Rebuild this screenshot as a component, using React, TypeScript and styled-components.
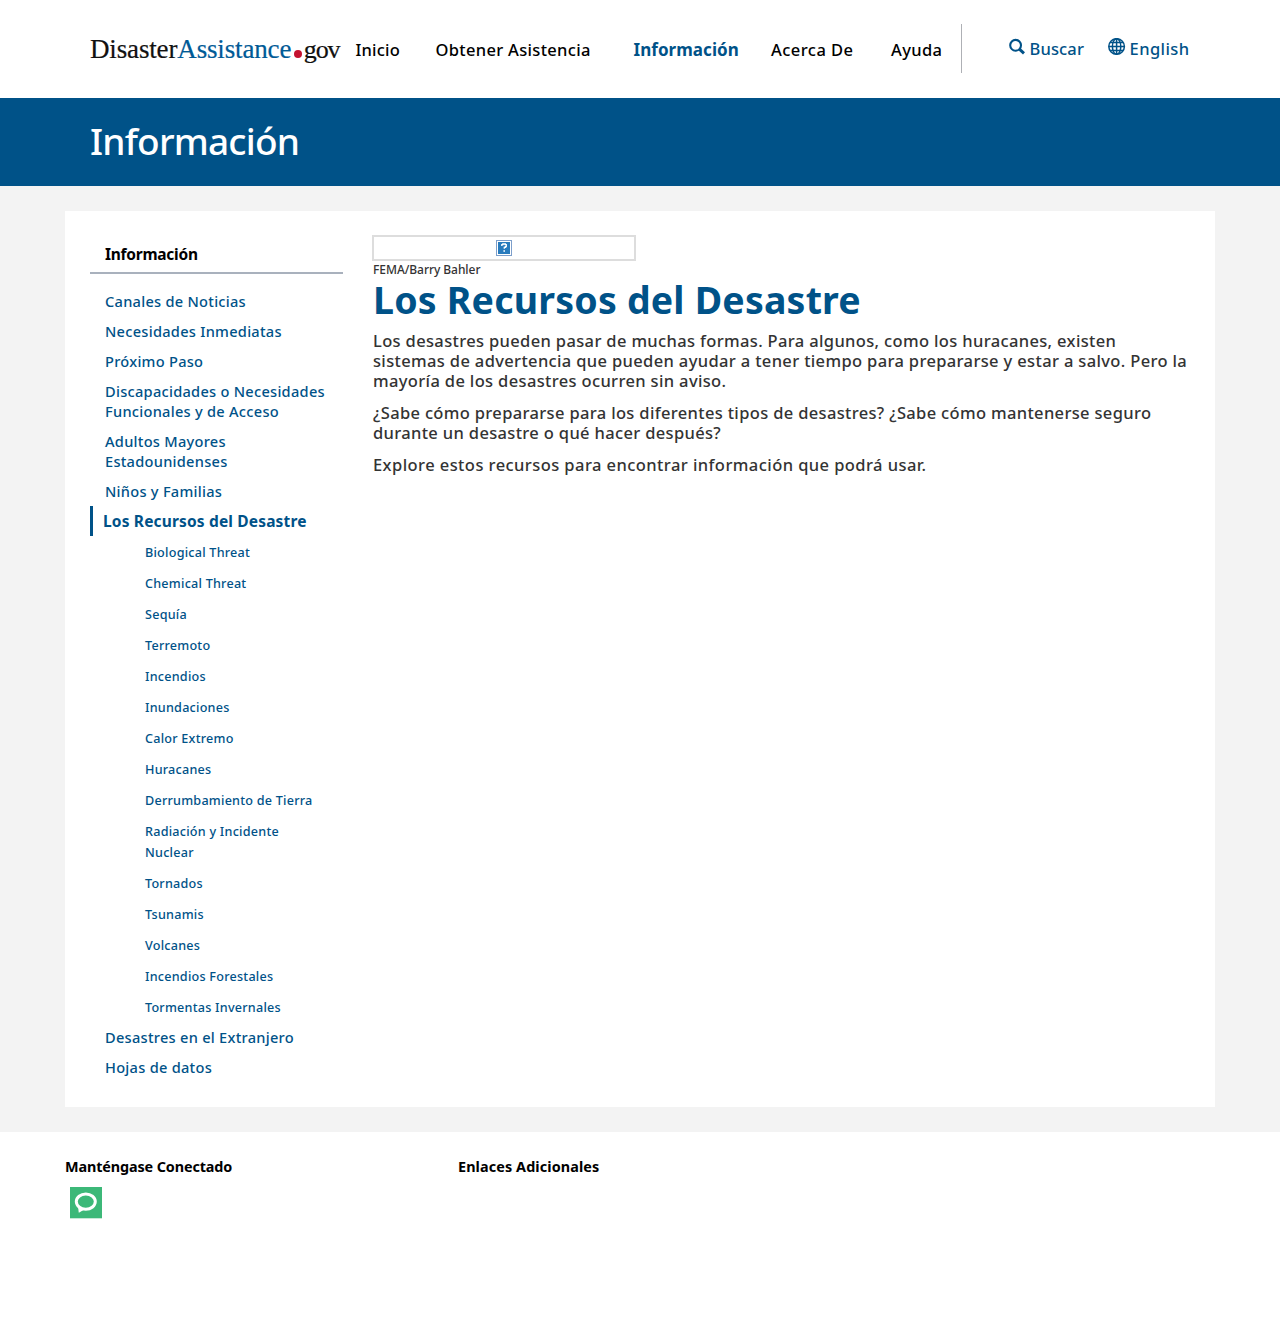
import React from "react";
import styled, { createGlobalStyle } from "styled-components";

const blue = "#005288";

const GlobalStyle = createGlobalStyle`
  *, *::before, *::after { box-sizing: border-box; }
  body {
    margin: 0;
    background: #fff;
    color: #333;
    font-family: "Noto Sans", "Open Sans", sans-serif;
    font-size: 16.5px;
    font-weight: 500;
  }
  h1, h2, h3, p, ul { margin: 0; padding: 0; }
  ul { list-style: none; }
  a { color: inherit; text-decoration: none; }
`;

const Page = styled.div`
  min-height: 1320px;
`;

const Header = styled.header`
  height: 98px;
  padding-left: 90px;
  display: flex;
  align-items: flex-start;
`;

const Logo = styled.a`
  width: 265.5px;
  padding-top: 34px;
  display: flex;
  align-items: baseline;
  font-family: "Liberation Serif", serif;
  font-size: 27px;
  font-weight: 400;
  line-height: 30px;
  color: #111;
  white-space: nowrap;
`;

const LogoPart = styled.span<{ $color?: string; $spacing: number }>`
  color: ${(p) => p.$color ?? "#111"};
  letter-spacing: ${(p) => p.$spacing}px;
  -webkit-text-stroke: 0.2px currentColor;
`;

const LogoSuffix = styled(LogoPart)`
  font-size: 26px;
`;

const LogoDot = styled.span`
  width: 8px;
  height: 8px;
  margin: 0 1.5px 0 3px;
  border-radius: 50%;
  background: #c41230;
`;

const Nav = styled.nav`
  display: flex;
  width: 606.5px;
  height: 49px;
  margin-top: 24px;
  padding-top: 16px;
  border-right: 1px solid #aeb0b5;
`;

const NavLink = styled.a<{ $width: number; $spacing: number; $active?: boolean }>`
  flex: none;
  width: ${(p) => p.$width}px;
  letter-spacing: ${(p) => p.$spacing}px;
  line-height: 20px;
  white-space: nowrap;
  color: ${(p) => (p.$active ? blue : "#000")};
  font-size: ${(p) => (p.$active ? 17 : 16.5)}px;
  font-weight: ${(p) => (p.$active ? 700 : 500)};
`;

const Tools = styled.div`
  display: flex;
  gap: 24px;
  padding: 38px 0 0 46px;
`;

const ToolLink = styled.a<{ $spacing: number }>`
  display: flex;
  gap: 3.5px;
  line-height: 21px;
  color: ${blue};
  letter-spacing: ${(p) => p.$spacing}px;

  svg { flex: none; }
`;

const Banner = styled.div`
  height: 88px;
  padding: 19px 0 0 90px;
  background: ${blue};
  color: #fff;
`;

const BannerTitle = styled.h1`
  font-size: 37px;
  font-weight: 500;
  line-height: 48px;
  letter-spacing: -0.8px;
`;

const Main = styled.main`
  padding: 25px 65px;
  background: #f3f3f3;
`;

const Card = styled.div`
  display: flex;
  align-items: flex-start;
  gap: 30px;
  height: 896px;
  padding: 24px 25px;
  background: #fff;
`;

const Sidebar = styled.aside`
  flex: none;
  width: 253px;
`;

const SidebarTitle = styled.h3`
  height: 39px;
  padding: 9px 0 0 15px;
  border-bottom: 2px solid #a9b1bd;
  font-size: 15.5px;
  font-weight: 700;
  line-height: 20px;
  letter-spacing: -0.25px;
  color: #000;
`;

const Menu = styled.ul`
  padding-top: 12px;
`;

const MenuItem = styled.li<{ $active?: boolean }>`
  padding: ${(p) => (p.$active ? "5px 0 5px 10px" : "5px 8px 5px 15px")};
  border-left: ${(p) => (p.$active ? `3px solid ${blue}` : "0")};
  font-size: ${(p) => (p.$active ? 15.5 : 14.6)}px;
  font-weight: ${(p) => (p.$active ? 700 : 500)};
  line-height: 20px;
  letter-spacing: ${(p) => (p.$active ? 0.16 : 0.27)}px;
  color: ${blue};
`;

const SubMenu = styled.ul`
  margin-bottom: -1px;
  padding: 1px 24px 0 55px;
`;

const SubItem = styled.li`
  padding: 5px 0;
  font-size: 12.6px;
  line-height: 21px;
  letter-spacing: 0.24px;
  color: ${blue};
`;

const Content = styled.article`
  flex: 1;
  min-width: 0;
`;

const MissingImage = styled.div`
  display: flex;
  align-items: center;
  justify-content: center;
  width: 264px;
  height: 26px;
  margin-left: -1px;
  border: 2px solid #ddd;
`;

const Caption = styled.p`
  font-size: 12px;
  line-height: 17px;
  letter-spacing: -0.05px;
`;

const Title = styled.h2`
  padding-top: 1px;
  margin-bottom: 10px;
  font-size: 37.5px;
  font-weight: 700;
  line-height: 42px;
  letter-spacing: 0.2px;
  color: ${blue};
`;

const Paragraph = styled.p<{ $spacing: number }>`
  margin-bottom: 12px;
  line-height: 20px;
  letter-spacing: ${(p) => p.$spacing}px;
`;

const Footer = styled.footer`
  display: flex;
  padding: 25px 65px 0;
`;

const FooterColumn = styled.section`
  width: 393px;
`;

const FooterTitle = styled.h3<{ $spacing: number }>`
  font-size: 14.4px;
  font-weight: 700;
  line-height: 20px;
  letter-spacing: ${(p) => p.$spacing}px;
  color: #000;
`;

const SocialLink = styled.a`
  display: block;
  width: 32px;
  height: 32px;
  margin: 10px 0 0 5px;
`;

const SearchIcon = () => (
  <svg width="18" height="18" viewBox="0 0 18 18" fill="none" stroke={blue}>
    <circle cx="7.6" cy="7.3" r="5.4" strokeWidth="2.1" />
    <path d="M11.4 11.1l4.6 4.3" strokeWidth="2.9" />
  </svg>
);

const GlobeIcon = () => (
  <svg width="18" height="18" viewBox="0 0 18 18" fill="none" stroke={blue} strokeWidth="1.5">
    <circle cx="8.6" cy="8.5" r="7.8" />
    <ellipse cx="8.6" cy="8.5" rx="4.2" ry="7.8" />
    <path d="M8.6 .6v15.8M.8 8.5h15.6M2 4.5h13.2M2 12.5h13.2" />
  </svg>
);

const MissingIcon = () => (
  <svg width="16" height="16" viewBox="0 0 16 16">
    <rect x=".5" y=".5" width="15" height="15" fill="#fff" stroke="#7d9fcb" />
    <rect x="2" y="2" width="12" height="12" fill="#287bbd" />
    <path d="M5.8 6V4.6h1V4h2.6v.7h.9v1.9h-.9v.8H8.3v1.4M7.4 11h1.6" fill="none" stroke="#fff" strokeWidth="1.3" />
  </svg>
);

const ChatIcon = () => (
  <svg width="32" height="32" viewBox="0 0 32 32">
    <rect width="32" height="31.3" fill="#3cb878" />
    <ellipse cx="15.8" cy="14.6" rx="9.5" ry="7.6" fill="none" stroke="#fff" strokeWidth="3" />
    <path d="M8 19.5l.8 6.3 5.2-3z" fill="#fff" />
  </svg>
);

const navLinks = [
  { label: "Inicio", width: 80, spacing: 0.2 },
  { label: "Obtener Asistencia", width: 198, spacing: 0.32 },
  { label: "Información", width: 137.5, spacing: 0.05, active: true },
  { label: "Acerca De", width: 120, spacing: 0.45 },
  { label: "Ayuda", width: 70, spacing: 0.35 },
];

const menuBefore = [
  "Canales de Noticias",
  "Necesidades Inmediatas",
  "Próximo Paso",
  "Discapacidades o Necesidades Funcionales y de Acceso",
  "Adultos Mayores Estadounidenses",
  "Niños y Familias",
];

const resources = [
  "Biological Threat",
  "Chemical Threat",
  "Sequía",
  "Terremoto",
  "Incendios",
  "Inundaciones",
  "Calor Extremo",
  "Huracanes",
  "Derrumbamiento de Tierra",
  "Radiación y Incidente Nuclear",
  "Tornados",
  "Tsunamis",
  "Volcanes",
  "Incendios Forestales",
  "Tormentas Invernales",
];

const menuAfter = ["Desastres en el Extranjero", "Hojas de datos"];

export default function App() {
  return (
    <Page>
      <GlobalStyle />
      <Header>
        <Logo href="#">
          <LogoPart $spacing={-0.15}>Disaster</LogoPart>
          <LogoPart $spacing={-0.15} $color="#005a96">Assistance</LogoPart>
          <LogoDot />
          <LogoSuffix $spacing={-1.1}>gov</LogoSuffix>
        </Logo>
        <Nav>
          {navLinks.map((l) => (
            <NavLink key={l.label} href="#" $width={l.width} $spacing={l.spacing} $active={l.active}>
              {l.label}
            </NavLink>
          ))}
        </Nav>
        <Tools>
          <ToolLink href="#" $spacing={0.15}>
            <SearchIcon />
            Buscar
          </ToolLink>
          <ToolLink href="#" $spacing={0.4}>
            <GlobeIcon />
            English
          </ToolLink>
        </Tools>
      </Header>
      <Banner>
        <BannerTitle>Información</BannerTitle>
      </Banner>
      <Main>
        <Card>
          <Sidebar>
            <SidebarTitle>Información</SidebarTitle>
            <Menu>
              {menuBefore.map((t) => (
                <MenuItem key={t}><a href="#">{t}</a></MenuItem>
              ))}
              <MenuItem $active><a href="#">Los Recursos del Desastre</a></MenuItem>
              <li>
                <SubMenu>
                  {resources.map((t) => (
                    <SubItem key={t}><a href="#">{t}</a></SubItem>
                  ))}
                </SubMenu>
              </li>
              {menuAfter.map((t) => (
                <MenuItem key={t}><a href="#">{t}</a></MenuItem>
              ))}
            </Menu>
          </Sidebar>
          <Content>
            <MissingImage><MissingIcon /></MissingImage>
            <Caption>FEMA/Barry Bahler</Caption>
            <Title>Los Recursos del Desastre</Title>
            <Paragraph $spacing={0.35}>
              Los desastres pueden pasar de muchas formas. Para algunos, como los huracanes, existen
              sistemas de advertencia que pueden ayudar a tener tiempo para prepararse y estar a salvo.
              Pero la mayoría de los desastres ocurren sin aviso.
            </Paragraph>
            <Paragraph $spacing={0.34}>
              ¿Sabe cómo prepararse para los diferentes tipos de desastres? ¿Sabe cómo mantenerse seguro
              durante un desastre o qué hacer después?
            </Paragraph>
            <Paragraph $spacing={0.43}>
              Explore estos recursos para encontrar información que podrá usar.
            </Paragraph>
          </Content>
        </Card>
      </Main>
      <Footer>
        <FooterColumn>
          <FooterTitle $spacing={-0.12}>Manténgase Conectado</FooterTitle>
          <SocialLink href="#"><ChatIcon /></SocialLink>
        </FooterColumn>
        <FooterColumn>
          <FooterTitle $spacing={0.1}>Enlaces Adicionales</FooterTitle>
        </FooterColumn>
      </Footer>
    </Page>
  );
}
